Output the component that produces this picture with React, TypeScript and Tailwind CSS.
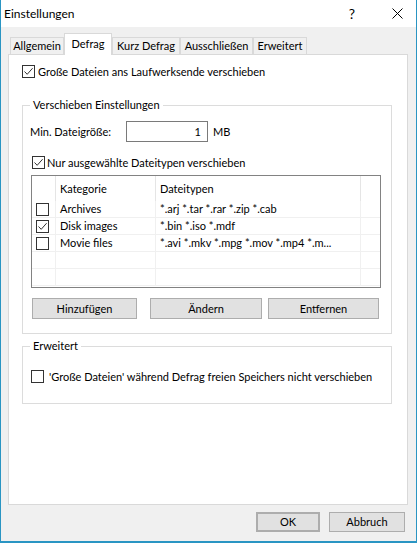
import React from 'react';

const Check = ({ checked }: { checked?: boolean }) => (
  <span className="flex h-[13px] w-[13px] shrink-0 items-center justify-center border border-[#333333] bg-white">
    {checked && (
      <svg width="11" height="11" viewBox="0 0 11 11">
        <path d="M1.5 5.5 L4.2 8.3 L9.6 2.2" fill="none" stroke="#333333" strokeWidth="1" />
      </svg>
    )}
  </span>
);

const Btn = ({ label, className }: { label: string; className: string }) => (
  <div className={`flex items-center justify-center border border-[#adadad] bg-[#e1e1e1] ${className}`}>{label}</div>
);

const tabs = [
  { label: 'Allgemein', w: 'w-[54px]' },
  { label: 'Defrag', w: 'w-[48px]', active: true },
  { label: 'Kurz Defrag', w: 'w-[68px]' },
  { label: 'Ausschließen', w: 'w-[73px]' },
  { label: 'Erweitert', w: 'w-[54px]' },
];

const rows = [
  { cat: 'Archives', types: '*.arj *.tar *.rar *.zip *.cab' },
  { cat: 'Disk images', types: '*.bin *.iso *.mdf', checked: true },
  { cat: 'Movie files', types: '*.avi *.mkv *.mpg *.mov *.mp4 *.m...' },
  { cat: '', types: '' },
  { cat: '', types: '' },
];

export default function App() {
  return (
    <div className="flex h-[543px] w-[417px] flex-col border-x border-b-2 border-[#2a95c3] bg-[#f0f0f0] font-['Lato',sans-serif] text-[11px] leading-[16px] text-black">
      {/* title bar */}
      <div className="flex h-[27px] items-center bg-white pl-[3px] text-[12px]">
        <span>Einstellungen</span>
        <span className="ml-auto mr-[37px] text-[14px]">?</span>
        <svg className="mr-[13px]" width="11" height="11" viewBox="0 0 11 11">
          <path d="M0.5 0.5 L10.5 10.5 M10.5 0.5 L0.5 10.5" stroke="#000" strokeWidth="1" />
        </svg>
      </div>

      {/* tabs */}
      <div className="mt-[6px] flex items-end whitespace-nowrap pl-[9px]">
        {tabs.map((t) =>
          t.active ? (
            <div key={t.label} className={`relative z-10 -mb-px flex h-[22px] items-start justify-center border border-b-0 border-[#d9d9d9] bg-white pt-[2px] ${t.w}`}>
              {t.label}
            </div>
          ) : (
            <div key={t.label} className={`flex h-[17px] items-center justify-center border border-b-0 border-[#d9d9d9] bg-[#f0f0f0] ${t.w}`}>
              {t.label}
            </div>
          ),
        )}
      </div>

      {/* panel */}
      <div className="ml-[7px] flex h-[451px] w-[400px] flex-col border border-[#d9d9d9] bg-white">
        <div className="ml-[13px] mt-[10px] flex h-[13px] items-center gap-[3px]">
          <Check checked />
          <span>Große Dateien ans Laufwerksende verschieben</span>
        </div>

        <fieldset className="ml-[13px] mt-[19px] w-[370px] border border-[#dcdcdc] pb-[14px]">
          <legend className="ml-[7px] px-[3px]">Verschieben Einstellungen</legend>
          <div className="mt-[8px] flex items-center pl-[7px]">
            <span className="w-[96px]">Min. Dateigröße:</span>
            <div className="flex h-[21px] w-[82px] items-center justify-end border border-[#7a7a7a] pr-[6px]">1</div>
            <span className="ml-[5px]">MB</span>
          </div>
          <div className="ml-[9px] mt-[14px] flex h-[13px] items-center gap-[2px]">
            <Check checked />
            <span>Nur ausgewählte Dateitypen verschieben</span>
          </div>
          <div className="ml-[8px] mt-[6px] h-[113px] w-[350px] border border-[#828282]">
            <div className="flex h-[25px] items-center">
              <div className="h-full w-[24px] border-r border-[#e5e5e5]" />
              <div className="flex h-full w-[100px] items-center border-r border-[#e5e5e5] pl-[4px]">Kategorie</div>
              <div className="flex h-full w-[205px] items-center border-r border-[#e5e5e5] pl-[4px]">Dateitypen</div>
            </div>
            {rows.map((r, i) => (
              <div key={i} className="flex h-[17px] items-center border-b border-[#f0f0f0]">
                <div className="flex h-full w-[24px] items-center border-r border-[#f0f0f0] pl-[4px]">
                  {r.cat && <Check checked={r.checked} />}
                </div>
                <div className="flex h-full w-[100px] items-center border-r border-[#f0f0f0] pl-[4px]">{r.cat}</div>
                <div className="flex h-full w-[205px] items-center border-r border-[#f0f0f0] pl-[4px] whitespace-nowrap">{r.types}</div>
              </div>
            ))}
          </div>
          <div className="ml-[9px] mt-[10px] flex">
            <Btn label="Hinzufügen" className="h-[21px] w-[105px]" />
            <Btn label="Ändern" className="ml-[13px] h-[21px] w-[112px]" />
            <Btn label="Entfernen" className="ml-[6px] h-[21px] w-[111px]" />
          </div>
        </fieldset>

        <fieldset className="ml-[13px] mt-[4px] w-[370px] border border-[#dcdcdc] pb-[20px]">
          <legend className="ml-[7px] px-[3px]">Erweitert</legend>
          <div className="ml-[8px] mt-[16px] flex h-[13px] items-center gap-[5px] whitespace-nowrap">
            <Check />
            <span>'Große Dateien' während Defrag freien Speichers nicht verschieben</span>
          </div>
        </fieldset>
      </div>

      {/* bottom buttons */}
      <div className="mr-[11px] mt-[7px] flex justify-end">
        <Btn label="OK" className="h-[20px] w-[64px] border-2 border-[#0078d7]" />
        <Btn label="Abbruch" className="ml-[9px] h-[20px] w-[76px]" />
      </div>
    </div>
  );
}
